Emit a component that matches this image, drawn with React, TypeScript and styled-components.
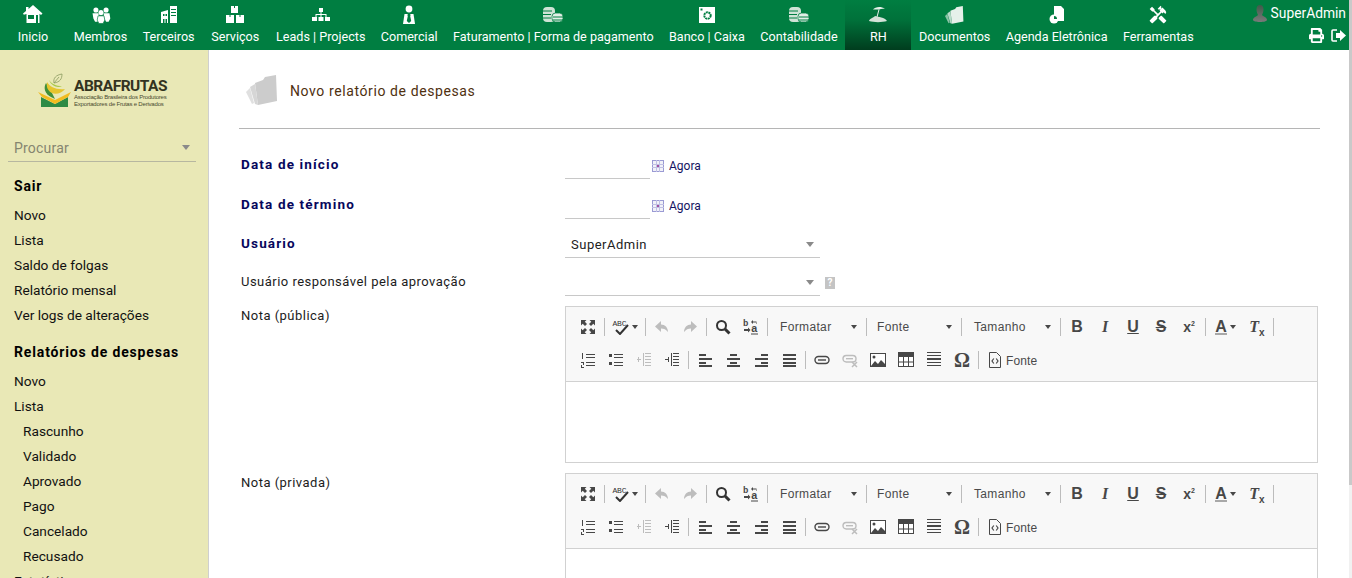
import React from "react";
import styled, { createGlobalStyle } from "styled-components";
import { FaPrint } from "react-icons/fa";
import { MdHandyman } from "react-icons/md";

const GlobalStyle = createGlobalStyle`
    html, body {
        margin: 0;
        padding: 0;
        height: 100%;
        overflow: hidden;
        background: #fff;
    }
    body {
        font-family: Roboto, "Liberation Sans", sans-serif;
        font-size: 13px;
        color: #222;
    }
`;

const GREEN = "#007e41";

/* ---------- top bar icons ---------- */

const Home = () => (
    <svg width="20" height="20" viewBox="0 0 20 20">
        <path fill="#fff" d="M10 0L19.500 8.500 18 10 16.500 8.700V18H3.500V9L.8 9.800 0 8.500 3 6V2h2.500v2z" />
        <path fill={GREEN} d="M5 10h6v4H5zM13 10h2v8h-2z" />
    </svg>
);
const People = () => (
    <svg width="22" height="20" viewBox="0 0 26 20">
        <g fill="#fff">
            <circle cx="7" cy="4" r="3" />
            <circle cx="19" cy="4" r="3" />
            <path d="M3 8h7l1 6-2 4H6l-2-4zM16 8h7l1 6-2 4h-3l-2-4z" />
            <circle cx="13" cy="7" r="3" />
            <path d="M9.500 11h7l1 5-2 4h-5l-2-4z" stroke={GREEN} strokeWidth=".8" />
        </g>
    </svg>
);
const Buildings = () => (
    <svg width="18" height="20" viewBox="0 0 18 20">
        <path fill="#fff" d="M10 1h7v17h-7zM1 7l7-2v13H1z" />
        <path fill={GREEN} d="M11 4h5v1h-5zM11 7h5v1h-5zM11 10h5v1h-5zM3 9h1.500v2H3zM5.500 9H7v2H5.500zM3 14h1.500v4H3zM5.500 14H7v4H5.500z" />
    </svg>
);
const Boxes = () => (
    <svg width="18" height="20" viewBox="0 0 18 20">
        <path fill="#fff" d="M5 1h7v7H5zM0 10h8v8H0zM10 10h8v8h-8z" />
        <path fill={GREEN} d="M8 1h1v2H8zM3.500 10h1v2h-1zM13.500 10h1v2h-1z" />
    </svg>
);
const OrgChart = () => (
    <svg width="18" height="20" viewBox="0 0 18 20">
        <path fill="#fff" d="M7 3h4v4H7zM8.500 7h1v2h5v3h-1v-2h-4v2h-1v-2h-4v2h-1V9h5zM0 12h5v4H0zM6.500 12h5v4h-5zM13 12h5v4h-5z" />
    </svg>
);
const Salesman = () => (
    <svg width="14" height="20" viewBox="0 0 14 20">
        <circle cx="7" cy="4" r="3.400" fill="#fff" />
        <path fill="#fff" d="M2.500 9h9L13 19H1z" />
        <path fill={GREEN} d="M6 9h2l.7 1-.5 1 1 5L7 18l-2.200-2 1-5-.5-1z" />
    </svg>
);
const Coins = () => (
    <svg width="20" height="16" viewBox="0 0 20 16">
        <rect x="0" y="0" width="12" height="15" rx="4" fill="#cfe3d6" />
        <rect x="9" y="6" width="11" height="9" rx="3.500" fill="#e1efe6" stroke={GREEN} strokeWidth=".8" />
        <path stroke={GREEN} strokeWidth="1" d="M0 4h9M0 7.500h8M0 11h8M10 10h10M10 13h10" />
    </svg>
);
const Safe = () => (
    <svg width="16" height="16" viewBox="0 0 16 16">
        <rect width="16" height="16" fill="#fff" />
        <circle cx="8.500" cy="8.500" r="3.200" fill="none" stroke={GREEN} strokeWidth="2" strokeDasharray="2 .6" />
        <path fill={GREEN} d="M1.500 1.500h2v2h-2z" />
    </svg>
);
const Island = () => (
    <svg width="20" height="18" viewBox="0 0 20 18">
        <path fill="#e7f0ea" d="M5 3.500C7 .5 13 0 17 2.500L13 3 11 3.500z" />
        <path stroke="#e7f0ea" strokeWidth="1" d="M11 3.500L9 11" />
        <path fill="#d3e2d8" d="M1 15c1-3 4-3 6-5 3 1 10 1 12 5-5 1.500-13 1.500-18 0z" />
    </svg>
);
const FolderStack = ({ color, size }: { color: string; size: number }) => (
    <svg width={size} height={size} viewBox="0 0 32 32">
        <path fill={color} opacity=".6" d="M0 17l4-4 4 15-2 1z" />
        <path fill={color} opacity=".8" d="M4 12l5-3 3 21-3-1z" />
        <path fill={color} d="M9 8l8-3 2-3 11-2 1 26-19 4z" />
    </svg>
);
const AgendaPie = () => (
    <svg width="16" height="20" viewBox="0 0 16 20">
        <path fill="#fff" d="M5 1h7l3 3v12H9a6 6 0 0 0-4-6z" />
        <circle cx="5" cy="14" r="4.500" fill="#fff" />
        <path fill={GREEN} d="M5 14v-3a3 3 0 0 1 3 3z" />
    </svg>
);
const LeaveIcon = () => (
    <svg width="15" height="13" viewBox="0 0 15 13">
        <path d="M6 1H2a1 1 0 0 0-1 1v9a1 1 0 0 0 1 1h4" fill="none" stroke="#fff" strokeWidth="1.600" />
        <path fill="#fff" d="M5 4h4V1l6 5.500L9 12V9H5z" />
    </svg>
);

type NavEntry = { label: string; icon: React.ReactNode; active?: boolean };

const navEntries: NavEntry[] = [
    { label: "Inicio", icon: <Home /> },
    { label: "Membros", icon: <People /> },
    { label: "Terceiros", icon: <Buildings /> },
    { label: "Serviços", icon: <Boxes /> },
    { label: "Leads | Projects", icon: <OrgChart /> },
    { label: "Comercial", icon: <Salesman /> },
    { label: "Faturamento | Forma de pagamento", icon: <Coins /> },
    { label: "Banco | Caixa", icon: <Safe /> },
    { label: "Contabilidade", icon: <Coins /> },
    { label: "RH", icon: <Island />, active: true },
    { label: "Documentos", icon: <FolderStack color="#e6f0ea" size={19} /> },
    { label: "Agenda Eletrônica", icon: <AgendaPie /> },
    { label: "Ferramentas", icon: <MdHandyman size={20} color="#fff" /> },
];

/* ---------- editor icons ---------- */

const DARK = "#474747";
const OFF = "#bdbdbd";

const Svg = styled.svg.attrs({ width: 16, height: 16, viewBox: "0 0 16 16" })`
    display: block;
`;

const Lines = ({ rows, color = DARK }: { rows: number[][]; color?: string }) => (
    <Svg>
        {rows.map(([x, y, w, h = 2], i) => (
            <rect key={i} x={x} y={y} width={w} height={h} fill={color} />
        ))}
    </Svg>
);

const icons: Record<string, React.ReactNode> = {
    maximize: (
        <Svg>
            <path fill={DARK} d="M1 1h5.500L4.800 2.700 7 5 5 7 2.700 4.800 1 6.500zM15 1v5.500l-1.700-1.700L11 7 9 5l2.300-2.300L9.500 1zM1 15V9.500l1.700 1.700L5 9l2 2-2.300 2.300L6.500 15zM15 15H9.500l1.700-1.700L9 11l2-2 2.300 2.300L15 9.500z" />
        </Svg>
    ),
    undo: (
        <Svg>
            <path fill={OFF} d="M7 2L1 7.500 7 13V9.500c3 0 5 1 7 3.500 0-4.500-3-7.500-7-7.500z" />
        </Svg>
    ),
    redo: (
        <Svg>
            <path fill={OFF} d="M9 2l6 5.500L9 13V9.500c-3 0-5 1-7 3.500 0-4.500 3-7.500 7-7.500z" />
        </Svg>
    ),
    find: (
        <Svg>
            <circle cx="6.500" cy="6.500" r="4.500" fill="none" stroke="#333" strokeWidth="2" />
            <path d="M10 10l4.500 4.500" stroke="#333" strokeWidth="3" />
        </Svg>
    ),
    replace: (
        <Svg>
            <text x="0" y="7" fontFamily="Liberation Mono, monospace" fontWeight="700" fontSize="9" fill={DARK}>b</text>
            <text x="8" y="13" fontFamily="Liberation Mono, monospace" fontWeight="700" fontSize="11" fill={DARK}>a</text>
            <path d="M8 3l2-2v1.500h3.500V5H13V3.500h-3V5z" fill={DARK} />
            <path d="M1 10h4V8.500L7.500 11 5 13.500V12H1z" fill={DARK} />
            <rect x="8" y="14.500" width="7" height="1" fill={DARK} />
        </Svg>
    ),
    ol: <Lines rows={[[6, 2, 9, 1], [6, 5, 9, 1], [6, 10, 9, 1], [6, 13, 9, 1], [2, 1, 1, 6], [1, 10, 3, 1], [3, 11, 1, 2], [1, 13, 1, 2], [1, 15, 3, 1]]} />,
    ul: <Lines rows={[[1, 2, 3, 3], [1, 10, 3, 3], [6, 2, 9, 1], [6, 5, 9, 1], [6, 10, 9, 1], [6, 13, 9, 1]]} />,
    outdent: <Lines color={OFF} rows={[[9, 1, 6, 1], [9, 4, 6, 1], [9, 7, 6, 1], [9, 10, 6, 1], [9, 13, 6, 1], [7, 1, 1, 13], [1, 7, 4, 1], [2, 5, 1, 5]]} />,
    indent: <Lines rows={[[9, 1, 6, 1], [9, 4, 6, 1], [9, 7, 6, 1], [9, 10, 6, 1], [9, 13, 6, 1], [7, 1, 1, 13], [1, 7, 4, 1], [4, 5, 1, 5]]} />,
    left: <Lines rows={[[2, 2, 7], [2, 6, 13], [2, 10, 7], [2, 13, 13]]} />,
    center: <Lines rows={[[5, 2, 7], [2, 6, 13], [5, 10, 7], [2, 13, 13]]} />,
    right: <Lines rows={[[8, 2, 7], [2, 6, 13], [8, 10, 7], [2, 13, 13]]} />,
    justify: <Lines rows={[[2, 2, 13], [2, 6, 13], [2, 10, 13], [2, 13, 13]]} />,
    link: (
        <Svg>
            <rect x="1" y="4.500" width="14" height="7" rx="3.500" fill="none" stroke={DARK} strokeWidth="1.400" />
            <rect x="4" y="7.300" width="8" height="1.400" fill={DARK} />
        </Svg>
    ),
    unlink: (
        <Svg>
            <rect x="1" y="3.500" width="13" height="6.500" rx="3.200" fill="none" stroke={OFF} strokeWidth="1.400" />
            <rect x="4" y="6" width="7" height="1.400" fill={OFF} />
            <path d="M10 10l5 5M15 10l-5 5" stroke={OFF} strokeWidth="1.500" />
        </Svg>
    ),
    image: (
        <Svg>
            <rect x=".5" y="1.500" width="15" height="13" fill="#fff" stroke={DARK} />
            <circle cx="4" cy="5" r="1.500" fill={DARK} />
            <path fill={DARK} d="M1 14l4-5 3 3 3-4 4 4v2z" />
        </Svg>
    ),
    table: (
        <Svg>
            <rect x=".5" y=".5" width="15" height="14" fill="#fff" stroke={DARK} />
            <path fill={DARK} d="M0 0h16v5H0zM5 5h1v10H5zM10 5h1v10h-1zM0 9.500h16v1H0z" />
        </Svg>
    ),
    hr: <Lines rows={[[1, 0, 14, 1], [1, 3, 14, 1], [1, 6, 14, 2], [1, 10, 14, 1], [1, 13, 14, 1]]} />,
    source: (
        <Svg>
            <path fill="none" stroke={DARK} d="M2.500 .5h7l4 4v11h-11z" />
            <path fill="none" stroke={DARK} strokeWidth="1.200" d="M6.800 6.500L5 9l1.800 2.500M9.200 6.500L11 9l-1.800 2.500" />
        </Svg>
    ),
};

/* ---------- page layout ---------- */

const Page = styled.div`
    display: flex;
    height: 100vh;
    overflow: hidden;
`;

const Main = styled.div`
    flex: 1;
    min-width: 0;
    display: flex;
    flex-direction: column;
`;

const ScrollTrack = styled.div`
    width: 3px;
    background: #f1f1f1;
`;

const ScrollThumb = styled.div`
    height: 485px;
    background: #c9c9c9;
`;

const TopBar = styled.header`
    height: 50px;
    flex: none;
    display: flex;
    background: ${GREEN};
    color: #fff;
`;

const Nav = styled.nav`
    display: flex;
`;

const NavItem = styled.a<{ $active?: boolean }>`
    min-width: 66px;
    box-sizing: border-box;
    padding: 5px 7.7px 0;
    display: flex;
    flex-direction: column;
    align-items: center;
    white-space: nowrap;
    font-size: 12.6px;
    background: ${(p) => (p.$active ? "linear-gradient(#007e41 0%, #00713a 40%, #003d1e 100%)" : "transparent")};
`;

const NavIcon = styled.span`
    height: 20px;
    display: flex;
    align-items: center;
    justify-content: center;
`;

const NavLabel = styled.span`
    margin-top: 3px;
    line-height: 17px;
    height: 17px;
`;

const UserArea = styled.div`
    margin-left: auto;
    padding: 5px 3px 0 0;
    display: flex;
    flex-direction: column;
    align-items: flex-end;
`;

const UserName = styled.div`
    display: flex;
    align-items: center;
    gap: 4px;
    font-size: 13.8px;
    line-height: 17px;
`;

const UserActions = styled.div`
    margin-top: 6px;
    display: flex;
    align-items: center;
    gap: 7px;
`;

const Body = styled.div`
    flex: 1;
    min-height: 0;
    display: flex;
`;

const Sidebar = styled.aside`
    width: 208px;
    flex: none;
    border-right: 1px solid #cfcfcf;
    background: #e9e8b6;
    color: #111;
`;

const LogoBlock = styled.div`
    padding: 23px 0 0 38px;
    height: 37px;
    display: flex;
    align-items: flex-start;
    gap: 2px;
`;

const LogoText = styled.div`
    display: flex;
    flex-direction: column;
    margin-top: 5px;
`;

const LogoName = styled.div`
    font-weight: 700;
    font-size: 15.5px;
    line-height: 16px;
    color: #33331f;
    letter-spacing: -0.5px;
`;

const LogoTagline = styled.div`
    font-family: "Liberation Sans", sans-serif;
    font-size: 6px;
    line-height: 7px;
    color: #4a4a30;
    white-space: nowrap;
    letter-spacing: -0.2px;
`;

const SearchBox = styled.div`
    margin: 24px 12px 0 8px;
    height: 27px;
    padding: 0 6px;
    display: flex;
    align-items: center;
    justify-content: space-between;
    border-bottom: 1px solid #b7b7a0;
    color: #858570;
    font-size: 14px;
    letter-spacing: 0.2px;
`;

const Caret = styled.span<{ $color?: string; $size?: number }>`
    width: 0;
    height: 0;
    flex: none;
    border-left: ${(p) => p.$size ?? 4}px solid transparent;
    border-right: ${(p) => p.$size ?? 4}px solid transparent;
    border-top: ${(p) => (p.$size ?? 4) + 1}px solid ${(p) => p.$color ?? "#8a8a8a"};
`;

const MenuGroup = styled.div`
    padding: 0 0 0 14px;
`;

const MenuTitle = styled.div`
    margin: 12px 0 4px;
    height: 25px;
    line-height: 25px;
    font-weight: 700;
    font-size: 14px;
    letter-spacing: 0.85px;
    color: #000;
    white-space: nowrap;
`;

const MenuLink = styled.div<{ $nested?: boolean }>`
    height: 25px;
    line-height: 25px;
    font-size: 13.7px;
    padding-left: ${(p) => (p.$nested ? "9px" : "0")};
`;

const Content = styled.main`
    flex: 1;
    min-width: 0;
    padding: 0 29px 0 30px;
`;

const TitleRow = styled.div`
    height: 74px;
    padding: 4px 0 0 7px;
    display: flex;
    align-items: center;
    gap: 12px;
    border-bottom: 1px solid #b5b5b5;
`;

const Title = styled.h1`
    margin: 0;
    font-weight: 400;
    font-size: 14px;
    letter-spacing: 0.6px;
    color: #4f3010;
`;

const Form = styled.div`
    padding-top: 10px;
`;

const FieldRow = styled.div<{ $height: number }>`
    height: ${(p) => p.$height}px;
    display: grid;
    grid-template-columns: 326px 1fr;
    align-items: end;
`;

const EditorRow = styled.div`
    margin-top: 10px;
    display: grid;
    grid-template-columns: 326px 1fr;
    align-items: start;
`;

const FieldLabel = styled.label<{ $strong?: boolean; $top?: boolean }>`
    padding-left: 2px;
    padding-bottom: ${(p) => (p.$top ? "0" : p.$strong ? "7px" : "6px")};
    padding-top: ${(p) => (p.$top ? "2px" : "0")};
    line-height: 16px;
    font-size: ${(p) => (p.$strong ? "13.5px" : "13px")};
    font-weight: ${(p) => (p.$strong ? 700 : 400)};
    letter-spacing: ${(p) => (p.$strong ? "1.15px" : "0.48px")};
    color: ${(p) => (p.$strong ? "#07075c" : "#1c1c1c")};
`;

const FieldValue = styled.div`
    display: flex;
    align-items: flex-end;
`;

const DateInput = styled.div`
    width: 85px;
    height: 24px;
    border-bottom: 1px solid #c8c8c8;
`;

const NowLink = styled.a`
    margin: 0 0 5px 2px;
    display: flex;
    align-items: center;
    gap: 5px;
    font-size: 12px;
    line-height: 16px;
    color: #14145f;
`;

const Select = styled.div`
    width: 243px;
    height: 26px;
    padding: 0 6px;
    display: flex;
    align-items: center;
    justify-content: space-between;
    border-bottom: 1px solid #c8c8c8;
    font-size: 13px;
    letter-spacing: 0.5px;
    color: #222;
`;

const HelpBadge = styled.span`
    margin: 0 0 7px 5px;
    width: 10px;
    height: 12px;
    background: #c4c4c4;
    color: #fff;
    font-size: 10px;
    font-weight: 700;
    line-height: 12px;
    text-align: center;
`;

const Editor = styled.div`
    width: 751px;
    border: 1px solid #d1d1d1;
`;

const Toolbar = styled.div`
    padding: 6px 8px 7px;
    background: #f8f8f8;
    border-bottom: 1px solid #d1d1d1;
    display: flex;
    flex-direction: column;
    gap: 5px;
`;

const ToolRow = styled.div`
    height: 28px;
    display: flex;
    align-items: center;
`;

const ToolButton = styled.span<{ $width?: number }>`
    width: ${(p) => p.$width ?? 28}px;
    height: 28px;
    flex: none;
    display: flex;
    align-items: center;
    justify-content: center;
    gap: 3px;
`;

const ToolSep = styled.span`
    width: 1px;
    height: 18px;
    margin: 0 2px;
    flex: none;
    background: #bcbcbc;
`;

const Combo = styled.span<{ $width: number; $pad: number }>`
    width: ${(p) => p.$width}px;
    box-sizing: border-box;
    padding: 0 7px 0 ${(p) => p.$pad}px;
    flex: none;
    display: flex;
    align-items: center;
    justify-content: space-between;
    font-family: "Liberation Sans", Arial, sans-serif;
    font-size: 12px;
    letter-spacing: 0.35px;
    color: #4a4a4a;
`;

const Glyph = styled.span<{ $italic?: boolean; $under?: boolean; $strike?: boolean; $serif?: boolean; $size?: number }>`
    font-family: ${(p) => (p.$serif ? '"Liberation Serif", serif' : '"Liberation Sans", Arial, sans-serif')};
    font-weight: 700;
    font-size: ${(p) => p.$size ?? 16}px;
    line-height: 16px;
    color: ${DARK};
    font-style: ${(p) => (p.$italic ? "italic" : "normal")};
    text-decoration: ${(p) => (p.$under ? "underline" : p.$strike ? "line-through" : "none")};
`;

const Sup = styled.sup`
    font-size: 7px;
    line-height: 0;
`;

const ColorA = styled(Glyph)`
    border-bottom: 2px solid #a8a8a8;
    line-height: 13px;
`;

const SmallX = styled.sub`
    font-family: "Liberation Sans", sans-serif;
    font-size: 10px;
    line-height: 0;
    font-style: normal;
`;

const SpellStack = styled.span`
    position: relative;
    width: 16px;
    height: 16px;
    font-family: "Liberation Mono", monospace;
    font-size: 8px;
    line-height: 9px;
    color: #333;
    letter-spacing: -0.2px;
`;

const SpellCheck = styled.svg`
    position: absolute;
    left: 2px;
    top: 5px;
`;

const SourceLabel = styled.span`
    margin: 2px 0 0 3px;
    font-family: "Liberation Sans", Arial, sans-serif;
    font-size: 12px;
    letter-spacing: 0.1px;
    color: #4a4a4a;
`;

const SourceButton = styled.span`
    margin-left: 6px;
    display: flex;
    align-items: center;
`;

const EditArea = styled.div`
    height: 80px;
    background: #fff;
`;

/* ---------- pieces ---------- */

const Calendar = () => (
    <svg width="12" height="12" viewBox="0 0 12 12">
        <rect x=".5" y=".5" width="11" height="11" fill="#f1f1f8" stroke="#9a9ad4" />
        <path stroke="#c0c0e4" d="M0 4.500h12M0 7.500h12M4.500 0v12M7.500 0v12" />
        <rect x="5" y="5" width="2" height="2" fill="#a050a0" />
    </svg>
);

const DateField = () => (
    <FieldValue>
        <DateInput />
        <NowLink>
            <Calendar />
            Agora
        </NowLink>
    </FieldValue>
);

const Logo = () => (
    <LogoBlock>
        <svg width="34" height="36" viewBox="0 0 34 36">
            <path fill="none" stroke="#8a9a60" strokeWidth=".8" d="M16 10c-1-5 2-8 8-9 0 5-2 8-8 9zM16 10l5-6" />
            <path fill="#3f8f3a" d="M8 10C5 15 7 21 13 24l4 2-3-6z" />
            <path fill="#e6c52e" d="M9 9c3 5 9 8 18 7-3 4-9 6-13 4-4-2-6-6-5-11z" />
            <path fill="#a8c84a" d="M11 7c3 4 7 6 13 6-4 2-10 1-13-6z" />
            <path fill="#2e8b45" d="M3 24l14 7 13-7v10H3z" />
            <path fill="#f2bc20" d="M0 19l17 8 16-8-3 5-13 7-13-7z" />
        </svg>
        <LogoText>
            <LogoName>ABRAFRUTAS</LogoName>
            <LogoTagline>Associação Brasileira dos Produtores</LogoTagline>
            <LogoTagline>Exportadores de Frutas e Derivados</LogoTagline>
        </LogoText>
    </LogoBlock>
);

const Sep = () => <ToolSep />;

const IconBtn = ({ name }: { name: string }) => <ToolButton>{icons[name]}</ToolButton>;

const RichEditor = () => (
    <Editor>
        <Toolbar>
            <ToolRow>
                <IconBtn name="maximize" />
                <Sep />
                <ToolButton $width={36}>
                    <SpellStack>
                        ABC
                        <SpellCheck width="14" height="11" viewBox="0 0 14 11">
                            <path d="M1 6l4 4 8-9" fill="none" stroke="#333" strokeWidth="2" />
                        </SpellCheck>
                    </SpellStack>
                    <Caret $size={3} $color="#474747" />
                </ToolButton>
                <Sep />
                <IconBtn name="undo" />
                <IconBtn name="redo" />
                <Sep />
                <IconBtn name="find" />
                <IconBtn name="replace" />
                <Sep />
                <Combo $width={94} $pad={10}>
                    Formatar
                    <Caret $size={3} $color="#474747" />
                </Combo>
                <Sep />
                <Combo $width={90} $pad={8}>
                    Fonte
                    <Caret $size={3} $color="#474747" />
                </Combo>
                <Sep />
                <Combo $width={94} $pad={10}>
                    Tamanho
                    <Caret $size={3} $color="#474747" />
                </Combo>
                <Sep />
                <ToolButton>
                    <Glyph>B</Glyph>
                </ToolButton>
                <ToolButton>
                    <Glyph $italic $serif $size={16}>I</Glyph>
                </ToolButton>
                <ToolButton>
                    <Glyph $under>U</Glyph>
                </ToolButton>
                <ToolButton>
                    <Glyph $strike>S</Glyph>
                </ToolButton>
                <ToolButton>
                    <Glyph $size={14}>
                        x<Sup>2</Sup>
                    </Glyph>
                </ToolButton>
                <Sep />
                <ToolButton $width={35}>
                    <ColorA>A</ColorA>
                    <Caret $size={3} $color="#474747" />
                </ToolButton>
                <ToolButton>
                    <Glyph $italic $serif $size={16}>
                        T<SmallX>x</SmallX>
                    </Glyph>
                </ToolButton>
                <Sep />
            </ToolRow>
            <ToolRow>
                <IconBtn name="ol" />
                <IconBtn name="ul" />
                <IconBtn name="outdent" />
                <IconBtn name="indent" />
                <Sep />
                <IconBtn name="left" />
                <IconBtn name="center" />
                <IconBtn name="right" />
                <IconBtn name="justify" />
                <Sep />
                <IconBtn name="link" />
                <IconBtn name="unlink" />
                <IconBtn name="image" />
                <IconBtn name="table" />
                <IconBtn name="hr" />
                <ToolButton>
                    <Glyph $serif $size={20}>Ω</Glyph>
                </ToolButton>
                <Sep />
                <SourceButton>{icons.source}</SourceButton>
                <SourceLabel>Fonte</SourceLabel>
            </ToolRow>
        </Toolbar>
        <EditArea />
    </Editor>
);

const Avatar = () => (
    <svg width="14" height="17" viewBox="0 0 14 17">
        <defs>
            <linearGradient id="avatarShade" x1="0" y1="0" x2="0" y2="1">
                <stop offset="0" stopColor="#3f5a49" />
                <stop offset="1" stopColor="#7a7a7a" />
            </linearGradient>
        </defs>
        <path fill="url(#avatarShade)" d="M7 0c2.500 0 3.500 2 3.500 4.500S9.500 9 9 10c1 1.500 5 2 5 5 0 1-3 2-7 2s-7-1-7-2c0-3 4-3.500 5-5-.5-1-1.500-3-1.500-5.500S4.500 0 7 0z" />
    </svg>
);

const menuOne = ["Novo", "Lista", "Saldo de folgas", "Relatório mensal", "Ver logs de alterações"];
const statuses = ["Rascunho", "Validado", "Aprovado", "Pago", "Cancelado", "Recusado"];

const App: React.FC = () => {
    return (
        <Page>
            <GlobalStyle />
            <Main>
                <TopBar>
                    <Nav>
                        {navEntries.map((item) => (
                            <NavItem key={item.label} $active={item.active}>
                                <NavIcon>{item.icon}</NavIcon>
                                <NavLabel>{item.label}</NavLabel>
                            </NavItem>
                        ))}
                    </Nav>
                    <UserArea>
                        <UserName>
                            <Avatar />
                            SuperAdmin
                        </UserName>
                        <UserActions>
                            <FaPrint size={15} color="#fff" />
                            <LeaveIcon />
                        </UserActions>
                    </UserArea>
                </TopBar>
                <Body>
                    <Sidebar>
                        <Logo />
                        <SearchBox>
                            Procurar
                            <Caret />
                        </SearchBox>
                        <MenuGroup>
                            <MenuTitle>Sair</MenuTitle>
                            {menuOne.map((m) => (
                                <MenuLink key={m}>{m}</MenuLink>
                            ))}
                            <MenuTitle>Relatórios de despesas</MenuTitle>
                            <MenuLink>Novo</MenuLink>
                            <MenuLink>Lista</MenuLink>
                            {statuses.map((m) => (
                                <MenuLink key={m} $nested>
                                    {m}
                                </MenuLink>
                            ))}
                            <MenuLink>Estatísticas</MenuLink>
                        </MenuGroup>
                    </Sidebar>
                    <Content>
                        <TitleRow>
                            <FolderStack color="#cccccc" size={32} />
                            <Title>Novo relatório de despesas</Title>
                        </TitleRow>
                        <Form>
                            <FieldRow $height={40}>
                                <FieldLabel $strong>Data de início</FieldLabel>
                                <DateField />
                            </FieldRow>
                            <FieldRow $height={40}>
                                <FieldLabel $strong>Data de término</FieldLabel>
                                <DateField />
                            </FieldRow>
                            <FieldRow $height={39}>
                                <FieldLabel $strong>Usuário</FieldLabel>
                                <FieldValue>
                                    <Select>
                                        SuperAdmin
                                        <Caret />
                                    </Select>
                                </FieldValue>
                            </FieldRow>
                            <FieldRow $height={38}>
                                <FieldLabel>Usuário responsável pela aprovação</FieldLabel>
                                <FieldValue>
                                    <Select>
                                        <span />
                                        <Caret />
                                    </Select>
                                    <HelpBadge>?</HelpBadge>
                                </FieldValue>
                            </FieldRow>
                            <EditorRow>
                                <FieldLabel $top>Nota (pública)</FieldLabel>
                                <RichEditor />
                            </EditorRow>
                            <EditorRow>
                                <FieldLabel $top>Nota (privada)</FieldLabel>
                                <RichEditor />
                            </EditorRow>
                        </Form>
                    </Content>
                </Body>
            </Main>
            <ScrollTrack>
                <ScrollThumb />
            </ScrollTrack>
        </Page>
    );
};

export default App;
